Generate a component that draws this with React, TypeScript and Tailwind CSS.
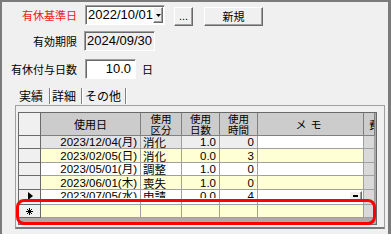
import React from "react";

const jp = "font-['Noto_Sans_CJK_JP',sans-serif]";
const mix = "font-['Liberation_Sans','Noto_Sans_CJK_JP',sans-serif]";

const raised =
  "border border-t-white border-l-white border-b-[#696969] border-r-[#696969] shadow-[inset_-1px_-1px_0_#a0a0a0] bg-[#f0f0f0]";
const sunken =
  "border border-t-[#a0a0a0] border-l-[#a0a0a0] border-b-white border-r-white shadow-[inset_1px_1px_0_#696969]";

type Row = {
  date: string;
  kind: string;
  days: string;
  hours: string;
  tone: "gray" | "yellow" | "white";
  h: string;
  current?: boolean;
};

const rows: Row[] = [
  { date: "2023/12/04(月)", kind: "消化", days: "1.0", hours: "0", tone: "gray", h: "h-[13px]" },
  { date: "2023/02/05(日)", kind: "消化", days: "0.0", hours: "3", tone: "yellow", h: "h-[14px]" },
  { date: "2023/05/01(月)", kind: "調整", days: "1.0", hours: "0", tone: "white", h: "h-[13px]" },
  { date: "2023/06/01(木)", kind: "喪失", days: "1.0", hours: "0", tone: "yellow", h: "h-[14px]" },
  { date: "2023/07/05(水)", kind: "申請", days: "0.0", hours: "4", tone: "white", h: "h-[15px]", current: true },
];

function Label({ children, className = "" }: { children: React.ReactNode; className?: string }) {
  return (
    <div className={`flex h-[20px] w-[75px] items-center justify-end text-[11px] ${jp} ${className}`}>
      {children}
    </div>
  );
}

function Cell({
  w,
  bg,
  align = "right",
  clip,
  children,
}: {
  w: string;
  bg: string;
  align?: "left" | "right";
  clip?: boolean;
  children?: React.ReactNode;
}) {
  const just = align === "right" ? "justify-end pr-[3px]" : "justify-start pl-[2px]";
  return (
    <div className={`${w} ${bg} relative shrink-0 overflow-hidden border-b border-r border-[#a0a0a0]`}>
      {clip ? (
        <div className={`flex h-[8px] overflow-hidden ${just}`}>
          <span className="whitespace-nowrap leading-[13px]">{children}</span>
        </div>
      ) : (
        <div className={`flex h-full items-center whitespace-nowrap leading-[12px] ${just}`}>{children}</div>
      )}
    </div>
  );
}

function Grid() {
  const head = "shrink-0 border-b border-r border-[#808080] bg-[#cccccc] flex items-center justify-center";
  return (
    <div className={`h-[113px] w-[359px] overflow-hidden border border-[#696969] bg-[#ababab] text-[11.5px] ${mix}`}>
      {/* header */}
      <div className={`flex h-[23px] text-[10.5px] leading-[11px] ${jp}`}>
        <div className="w-[22px] shrink-0 border-b border-r border-[#696969] bg-[#f0f0f0]" />
        <div className={`${head} w-[100px] text-[11px]`}>使用日</div>
        <div className={`${head} w-[41px] text-center`}>
          使用
          <br />
          区分
        </div>
        <div className={`${head} w-[38px] text-center`}>
          使用
          <br />
          日数
        </div>
        <div className={`${head} w-[38px] text-center`}>
          使用
          <br />
          時間
        </div>
        <div className={`${head} w-[106px] text-[11px] tracking-[4px]`}>メモ</div>
        <div className={`${head} w-[11px] !justify-start overflow-hidden pl-[5px]`}>
          <span className="shrink-0">費</span>
        </div>
      </div>

      {rows.map((r) => {
        const a = r.tone === "gray" ? "bg-[#e4e4e4]" : r.tone === "yellow" ? "bg-[#ffffd6]" : "bg-white";
        const b = r.tone === "gray" ? "bg-[#eeeeee]" : a;
        const m = r.tone === "yellow" ? "bg-[#ffffd6]" : "bg-white";
        return (
          <div key={r.date} className={`flex ${r.h}`}>
            <div className="relative w-[22px] shrink-0 border-b border-r border-[#696969] bg-[#f0f0f0]">
              {r.current && (
                <svg className="absolute left-[9px] top-[2px]" width="5" height="8" viewBox="0 0 5 8">
                  <path d="M0 0 L5 4 L0 8 Z" fill="#000" />
                </svg>
              )}
            </div>
            <Cell w="w-[100px]" bg={a} clip={r.current}>
              {r.date}
            </Cell>
            <Cell w="w-[41px]" bg={a} align="left" clip={r.current}>
              <span className={jp}>{r.kind}</span>
            </Cell>
            <Cell w="w-[38px]" bg={b} clip={r.current}>
              {r.days}
            </Cell>
            <Cell w="w-[38px]" bg={b} clip={r.current}>
              {r.hours}
            </Cell>
            <div className={`relative w-[106px] shrink-0 border-b border-r border-[#a0a0a0] ${m}`}>
              {r.current && (
                <div className={`absolute right-[1px] top-[1px] flex h-[10px] w-[13px] items-center justify-center ${raised}`}>
                  <div className="h-[2px] w-[5px] bg-black" />
                </div>
              )}
            </div>
            <div className="w-[11px] shrink-0 border-b border-r border-[#a0a0a0] bg-[#d9d9d9]" />
          </div>
        );
      })}

      {/* new row */}
      <div className="flex h-[13px]">
        <div className="flex w-[22px] shrink-0 items-center justify-center border-b border-r border-[#696969] bg-[#f0f0f0]">
          <svg width="7" height="7" viewBox="0 0 7 7" stroke="#000" strokeWidth="1">
            <path d="M3.5 0 V7 M0 3.5 H7 M1 1 L6 6 M6 1 L1 6" />
          </svg>
        </div>
        <div className="w-[100px] shrink-0 border-b border-r border-[#a0a0a0] bg-[#ffffd6]" />
        <div className="w-[41px] shrink-0 border-b border-r border-[#a0a0a0] bg-[#ffffd6]" />
        <div className="w-[38px] shrink-0 border-b border-r border-[#a0a0a0] bg-[#ffffd6]" />
        <div className="w-[38px] shrink-0 border-b border-r border-[#a0a0a0] bg-[#ffffd6]" />
        <div className="w-[106px] shrink-0 border-b border-r border-[#a0a0a0] bg-[#ffffd6]" />
        <div className="w-[11px] shrink-0 border-b border-r border-[#a0a0a0] bg-[#d9d9d9]" />
      </div>
    </div>
  );
}

export default function App() {
  return (
    <div className="relative h-[234px] w-[391px] overflow-hidden border-l-2 border-r-[3px] border-t-2 border-[#7b7b7b] bg-[#f0f0f0] text-black">
      <div className="pt-[3px]">
        {/* 有休基準日 */}
        <div className="flex h-[21px] items-start">
          <Label className="text-[#f01818]">有休基準日</Label>
          <div className={`ml-[8px] flex h-[20px] w-[80px] items-center bg-white ${sunken}`}>
            <span className={`flex-1 pl-[2px] text-[13px] ${mix}`}>2022/10/01</span>
            <div className={`mr-[1px] flex h-[16px] w-[12px] items-center justify-center ${raised}`}>
              <svg width="5" height="3" viewBox="0 0 5 3">
                <path d="M0 0 H5 L2.5 3 Z" fill="#000" />
              </svg>
            </div>
          </div>
          <div className={`ml-[9px] mt-[2px] flex h-[19px] w-[19px] items-end justify-center pb-[3px] text-[11px] leading-none ${mix} ${raised}`}>
            ...
          </div>
          <div className={`ml-[11px] mt-[2px] flex h-[19px] w-[59px] items-center justify-center text-[11px] ${jp} ${raised}`}>
            新規
          </div>
        </div>

        {/* 有効期限 */}
        <div className="mt-[5px] flex h-[20px] items-center">
          <Label>有効期限</Label>
          <div className={`ml-[7px] flex h-[20px] w-[71px] items-center bg-[#f0f0f0] pl-[2px] text-[13px] ${mix} ${sunken}`}>
            2024/09/30
          </div>
        </div>

        {/* 有休付与日数 */}
        <div className="mt-[8px] flex h-[20px] items-center">
          <Label>有休付与日数</Label>
          <div className={`ml-[8px] flex h-[20px] w-[51px] items-center justify-end bg-white pr-[4px] text-[13px] ${mix} ${sunken}`}>
            10.0
          </div>
          <span className={`ml-[6px] text-[11px] ${jp}`}>日</span>
        </div>

        {/* tabs */}
        <div className={`mt-[8px] flex h-[18px] items-center text-[12px] ${jp}`}>
          <div className="w-[47px] pl-[17px]">実績</div>
          <div className="h-[16px] w-[2px] border-l border-r border-l-[#808080] border-r-white" />
          <div className="w-[30px] pl-[1px]">詳細</div>
          <div className="h-[16px] w-[2px] border-l border-r border-l-[#808080] border-r-white" />
          <div className="w-[42px] pl-[2px]">その他</div>
          <div className="h-[16px] w-[2px] border-l border-r border-l-[#808080] border-r-white" />
        </div>

        {/* tab page */}
        <div className="ml-[13px] h-[124px] w-[370px] border-b-2 border-l border-r border-t border-[#a0a0a0] border-b-[#7b7b7b] pl-[2px] pt-[6px]">
          <Grid />
        </div>
      </div>

      {/* highlight */}
      <div className="pointer-events-none absolute left-[14px] top-[197px] h-[26px] w-[360px] rounded-[8px] border-[3px] border-[#ff0000]" />
    </div>
  );
}
